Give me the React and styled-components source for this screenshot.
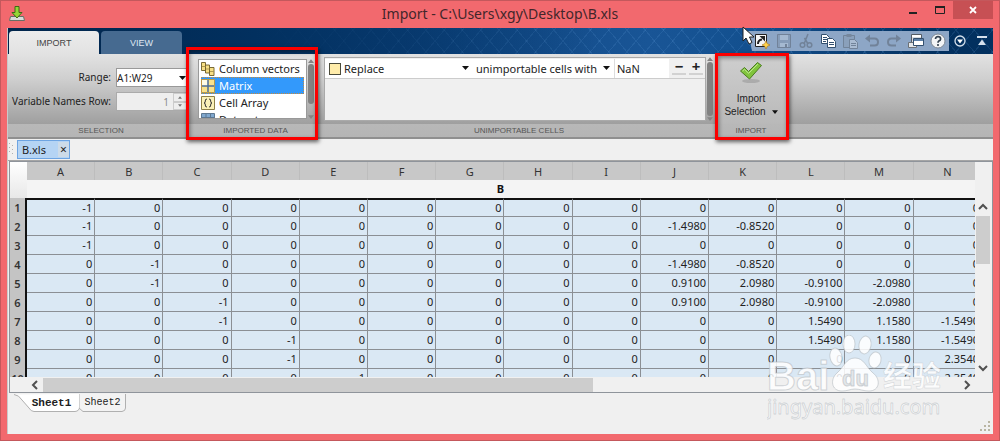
import styled, { createGlobalStyle, css } from "styled-components";

const GlobalStyle = createGlobalStyle`
  * {
    box-sizing: border-box;
  }
  body {
    margin: 0;
    font-family: "Noto Sans", "Open Sans", sans-serif;
    font-size: 11px;
    color: #222;
  }
  button,
  input,
  select {
    margin: 0;
    padding: 0;
    border: none;
    border-radius: 0;
    background: none;
    font: inherit;
    color: inherit;
  }
`;

const Window = styled.div`
  position: relative;
  display: flex;
  flex-direction: column;
  height: 100vh;
  min-height: 320px;
  padding: 0 6px 6px;
  border: 1px solid #c4585c;
  background: #f2696e;
  overflow: hidden;
`;

const TitleBar = styled.header`
  display: grid;
  grid-template-columns: 1fr auto 1fr;
  flex: none;
  height: 27px;
`;

const AppIcon = styled.svg`
  margin: 5px 0 0 2px;
`;

const Title = styled.h1`
  margin: 0;
  font-size: 14px;
  font-weight: 400;
  line-height: 26px;
  color: #43262a;
`;

const WindowButtons = styled.div`
  display: flex;
  justify-content: flex-end;
`;

const WindowButton = styled.button`
  display: flex;
  align-items: center;
  justify-content: center;
  width: ${(props) => (props.$close ? "40px" : "27px")};
  height: 18px;
  background: ${(props) => (props.$close ? "#c75054" : "none")};
`;

const Client = styled.main`
  display: flex;
  flex-direction: column;
  flex: 1;
  min-height: 0;
  border-left: 1px solid #c9c9c9;
  background: #f0f0f0;
`;

const Strip = styled.div`
  display: flex;
  align-items: flex-end;
  flex: none;
  height: 26px;
  background:
    linear-gradient(90deg, #01254b 0, #02305f 25%, transparent 60%),
    repeating-linear-gradient(50deg, transparent 0 13px, rgba(120, 180, 240, 0.12) 13px 14px),
    repeating-linear-gradient(130deg, transparent 0 13px, rgba(120, 180, 240, 0.12) 13px 14px),
    linear-gradient(90deg, #0d437e 40%, #195596 65%, #13508f 75%, #02305f 94%);
`;

const StripTab = styled.button`
  width: ${(props) => (props.$active ? "90px" : "81px")};
  height: 23px;
  margin: 0 1px;
  border-radius: 4px 4px 0 0;
  font-family: "Liberation Sans", Arial, sans-serif;
  font-size: 9px;
  color: ${(props) => (props.$active ? "#444" : "#dfe8f2")};
  background: ${(props) => (props.$active ? "linear-gradient(#ececec, #e2e2e2)" : "#466a90")};
`;

const QuickAccess = styled.div`
  display: flex;
  height: 20px;
  margin: 0 0 3px auto;
  padding-left: 3px;
  background: #8da6c6;
  clip-path: polygon(0 0, 100% 0, 100% 100%, 4px 100%);
`;

const StripActions = styled.div`
  display: flex;
  height: 20px;
  margin-bottom: 3px;
`;

const IconButton = styled.button`
  display: flex;
  align-items: center;
  justify-content: center;
  width: 22px;
  height: 20px;
  opacity: ${(props) => (props.disabled ? 0.3 : 1)};
`;

const Ribbon = styled.div`
  display: flex;
  flex: none;
  height: 85px;
  border-bottom: 2px solid #8f8f8f;
  background: linear-gradient(#e2e2e2 0, #cfcfcf 30%, #9f9f9f 70px, #b8b8b8 70px, #b5b5b5 100%);
`;

const Group = styled.section`
  position: relative;
  display: flex;
  flex-direction: column;
  flex: none;
  width: ${(props) => props.$width};
`;

const GroupBody = styled.div`
  display: flex;
  flex: 1;
  min-height: 0;
  padding: ${(props) => props.$padding || "0"};
`;

const GroupLabel = styled.h2`
  margin: 0;
  padding-left: ${(props) => (props.$indent ? "6px" : "0")};
  font-family: "Liberation Sans", Arial, sans-serif;
  font-size: 8px;
  font-weight: 400;
  line-height: 13px;
  text-align: center;
  color: #555;
`;

const Highlight = styled.div`
  position: absolute;
  inset: ${(props) => props.$inset};
  border: 3px solid #fb0000;
  box-shadow: 1px 2px 4px rgba(0, 0, 0, 0.6), inset 1px 2px 4px rgba(0, 0, 0, 0.4);
  pointer-events: none;
  z-index: 2;
`;

const Fields = styled.div`
  display: grid;
  grid-template-columns: 1fr 72px;
  grid-auto-rows: 19px;
  gap: 5px;
  width: 100%;
  font-size: 10px;
`;

const FieldLabel = styled.label`
  line-height: 19px;
  text-align: right;
  white-space: nowrap;
`;

const SelectBox = styled.span`
  position: relative;
  display: block;
  flex: none;
  width: ${(props) => props.$width || "100%"};
  height: 19px;
  background: #fff;
  ${(props) =>
    props.$framed &&
    css`
      border: 1px solid #999;
    `}

  select {
    appearance: none;
    width: 100%;
    height: 100%;
    padding-left: ${(props) => props.$indent || "0"};
    outline: none;
  }
`;

const SelectArrow = styled.svg`
  position: absolute;
  top: 7px;
  right: ${(props) => props.$right || "3px"};
  pointer-events: none;
`;

const Swatch = styled.span`
  position: absolute;
  top: 4px;
  left: 4px;
  width: 12px;
  height: 12px;
  border: 1px solid #4a4a3a;
  background: #ffecaa;
`;

const Spinner = styled.div`
  display: flex;
  border: 1px solid #aaa;
  background: #eee;

  input {
    flex: 1;
    min-width: 0;
    padding-right: 4px;
    text-align: right;
    color: #8a8a8a;
  }
`;

const SpinnerButtons = styled.div`
  display: flex;
  flex-direction: column;
  width: 14px;

  button {
    display: flex;
    align-items: center;
    justify-content: center;
    flex: 1;
    border: 1px solid #ccc;
  }
`;

const TypeList = styled.div`
  flex: 1;
  min-width: 0;
  padding: 0 2px;
  border: 1px solid #999;
  background: #fff;
  overflow: hidden;
`;

const TypeOption = styled.button`
  display: flex;
  align-items: center;
  gap: 4px;
  width: 100%;
  height: 17px;
  line-height: 17px;
  white-space: nowrap;
  color: ${(props) => (props.$selected ? "#fff" : "#222")};
  background: ${(props) => (props.$selected ? "#3399fb" : "none")};
  outline: ${(props) => (props.$selected ? "1px dotted #c78a3c" : "none")};
  outline-offset: -1px;
`;

const ThinScroll = styled.div`
  display: flex;
  flex-direction: column;
  align-items: center;
  flex: none;
  gap: 1px;
  width: 8px;
`;

const ThinThumb = styled.div`
  flex: ${(props) => (props.$full ? "1" : "0 0 40px")};
  width: 6px;
  margin-bottom: auto;
  border-radius: 3px;
  background: #828282;
`;

const RulePanel = styled.div`
  flex: 1;
  border: 1px solid #aaa;
  background: #f0f0f0;
`;

const RuleRow = styled.div`
  display: flex;
  height: 21px;
  padding: 1px 0;
  border-bottom: 1px solid #ccc;
`;

const RuleValue = styled.input`
  width: 55px;
  height: 19px;
  padding-left: 2px;
  border-left: 1px solid #ddd;
  background: #fff;
`;

const RuleButton = styled.button`
  width: 14px;
  height: 16px;
  margin-left: 3px;
  border-bottom: 2px solid #d2d2d2;
  font-size: 15px;
  font-weight: 700;
  line-height: 13px;
`;

const ImportButton = styled.button`
  display: flex;
  flex-direction: column;
  align-items: center;
  flex: 1;
  padding-top: 7px;
  font-family: "Liberation Sans", Arial, sans-serif;
  font-size: 10px;
  line-height: 13px;
  background: linear-gradient(#cfcfcf, #b9b9b9);
`;

const ImportIcon = styled.svg`
  flex: none;
  margin-bottom: 9px;
`;

const ImportCaption = styled.span`
  display: flex;
  align-items: center;
  gap: 6px;
`;

const FileBar = styled.nav`
  display: flex;
  flex: none;
  height: 22px;
  border-bottom: 1px solid #a5a5a5;
`;

const FileTab = styled.div`
  display: flex;
  align-items: center;
  justify-content: space-between;
  width: 53px;
  height: 19px;
  margin: 1px 0 0 1px;
  padding-left: 4px;
  border: 1px solid #6da4e2;
  background: #b5d4f4;

  button {
    width: 11px;
    height: 15px;
    font-size: 12px;
    line-height: 14px;
    background: #cddbe8;
  }
`;

const Sheet = styled.section`
  display: grid;
  grid-template-columns: 1fr 17px;
  grid-template-rows: 1fr 15px;
  flex: 1;
  min-height: 0;
  margin: 0 0 0 1px;
  border: 1px solid #8f949b;
  background: #f0f0f0;
`;

const Viewport = styled.div`
  overflow: hidden;
  background: #fff;
`;

const Grid = styled.table`
  width: 972px;
  table-layout: fixed;
  border-collapse: separate;
  border-spacing: 0;
  font-size: 11px;
`;

const ColumnHead = styled.th`
  height: 18px;
  padding: 0;
  border-right: 1px solid #bdbdbd;
  font-weight: 400;
  line-height: 17px;
  color: #333;
  background: #c8c8c8;
`;

const Corner = styled.th`
  width: 17px;
  padding: 0;
  background: linear-gradient(#fff, #e8e8e8);
`;

const VariableHead = styled.th`
  height: 18px;
  padding: 0 8px 0 0;
  font-weight: 700;
  line-height: 18px;
  color: #111;
  background: #f4f4f4;
`;

const RowHead = styled.th`
  height: 19px;
  padding: 0;
  border-right: 2px solid #111;
  font-size: 11px;
  font-weight: 600;
  line-height: 17px;
  color: #333;
  background: #c4c4c4;
  overflow: hidden;
`;

const Cell = styled.td`
  height: 19px;
  padding: 0 2px 0 0;
  border-right: 1px solid #8b8f94;
  border-bottom: 1px solid #8b8f94;
  border-top: ${(props) => (props.$first ? "2px solid #111" : "none")};
  line-height: ${(props) => (props.$first ? "16px" : "18px")};
  text-align: right;
  white-space: nowrap;
  background: #dae8f4;
`;

const VerticalScroll = styled.div`
  display: flex;
  flex-direction: column;
  padding-top: 36px;

  svg {
    flex: none;
    margin: 4px 3px;
  }
`;

const VerticalThumb = styled.div`
  height: 48px;
  margin: 0 2px auto 1px;
  background: #cdcdcd;
`;

const HorizontalScroll = styled.div`
  display: flex;
  align-items: center;
  padding-left: 17px;

  svg {
    flex: none;
    margin: 0 3px;
  }
`;

const HorizontalThumb = styled.div`
  width: 58%;
  height: 14px;
  margin: 0 auto 0 0;
  background: #cdcdcd;
`;

const SheetTabs = styled.footer`
  display: flex;
  align-items: flex-start;
  flex: none;
  height: 41px;
  padding: 1px 0 0 6px;
`;

const SheetTab = styled.button`
  position: relative;
  width: ${(props) => (props.$active ? "65px" : "47px")};
  height: 18px;
  padding-left: ${(props) => (props.$active ? "10px" : "0")};
  font-family: "Liberation Mono", "Courier New", monospace;
  font-size: ${(props) => (props.$active ? "11px" : "10px")};
  font-weight: ${(props) => (props.$active ? 700 : 400)};
  line-height: 18px;

  span {
    position: relative;
  }
`;

const TabShape = styled.svg`
  position: absolute;
  inset: 0;
`;

const ResizeGrip = styled.svg`
  margin: 26px 2px 0 auto;
`;

const Pointer = styled.svg`
  position: absolute;
  top: 25px;
  right: 244px;
  pointer-events: none;
`;

const Watermark = styled.svg`
  position: absolute;
  right: 42px;
  bottom: 15px;
  pointer-events: none;
`;

const Arrow = ({ up, color = "#111", size = 8 }) => (
  <svg width={size} height={size / 2 + 1} viewBox="0 0 8 5">
    <path d={up ? "M0 5L4 0L8 5Z" : "M0 0L4 5L8 0Z"} fill={color} />
  </svg>
);

const Chevron = ({ d }) => (
  <svg width="10" height="10" viewBox="0 0 10 10" fill="none" stroke="#505050" strokeWidth="2">
    <path d={d} />
  </svg>
);

const Dropdown = ({ value, label, width, framed, indent, arrowRight, id, children }) => (
  <SelectBox $width={width} $framed={framed} $indent={indent}>
    <select id={id} aria-label={label} defaultValue={value}>
      <option>{value}</option>
    </select>
    {children}
    <SelectArrow $right={arrowRight} width="7" height="4" viewBox="0 0 7 4">
      <path d="M0 0H7L3.5 4Z" fill="#111" />
    </SelectArrow>
  </SelectBox>
);

const Scroller = ({ full }) => (
  <ThinScroll>
    <Arrow up color="#858585" size={6} />
    <ThinThumb $full={full} />
    <Arrow color="#858585" size={6} />
  </ThinScroll>
);

const typeIcons = {
  columns: (
    <g fill="#f7df85" stroke="#6b5b26" strokeWidth=".9">
      <path d="M.5 .5H4.500V8.500H.5Z" />
      <path d="M4.500 3H8.500V11H4.500Z" />
      <path d="M8.500 5.500H13V13.500H8.500Z" />
      <path d="M1 4.500H4.500M5 7H8.500M9 9.500H13" stroke="#a8924a" />
    </g>
  ),
  matrix: (
    <>
      <path d="M.5 .5H13.5V13.5H.5Z" fill="#f9e28c" stroke="#b59a4a" />
      <path d="M1 1H7V7H1Z" fill="#fffbe6" />
      <path d="M7 1V13M1 7H13" stroke="#4c6c96" strokeWidth="1.5" />
    </>
  ),
  cell: (
    <>
      <path d="M.5 .5H13.5V13.5H.5Z" fill="#fbf1b8" stroke="#8f8146" />
      <path
        d="M6 3Q4 3 4.300 5Q4.500 7 3 7Q4.500 7 4.300 9Q4 11 6 11M8 3Q10 3 9.700 5Q9.500 7 11 7Q9.500 7 9.700 9Q10 11 8 11"
        fill="none"
        stroke="#333"
      />
    </>
  ),
  dataset: (
    <>
      <path d="M.5 .5H13.5V13.5H.5Z" fill="#f6eaa8" stroke="#5d7892" />
      <path d="M1 1H13V4H1Z" fill="#80a8cf" />
      <path d="M5 1V14M9.500 1V14M0 4.500H14M0 9H14" stroke="#5d7892" />
    </>
  ),
};

const types = [
  { name: "Column vectors", icon: "columns" },
  { name: "Matrix", icon: "matrix", selected: true },
  { name: "Cell Array", icon: "cell" },
  { name: "Dataset", icon: "dataset" },
];

const quickIcons = [
  {
    name: "New shortcut",
    art: (
      <>
        <path d="M1.500 1.500H12.500V13.500H1.500Z" fill="#f5f5f5" stroke="#222" />
        <path d="M4 11Q4 7 8 6.500" fill="none" stroke="#222" strokeWidth="2" />
        <path d="M5.500 3H11V8.500Z" fill="#222" />
        <path d="M12 8L13.300 10.700L16 12L13.300 13.300L12 16L10.700 13.300L8 12L10.700 10.700Z" fill="#ffd24a" stroke="#ad7616" strokeWidth=".6" />
      </>
    ),
  },
  {
    name: "Save",
    disabled: true,
    art: (
      <>
        <path d="M1.500 1.500H14.500V14.500H1.500Z" fill="#79889b" stroke="#333" />
        <path d="M4 2H12V7H4ZM4 10H12V14H4Z" fill="#dfe5ec" />
        <path d="M9 11H11V14H9Z" fill="#333" />
      </>
    ),
  },
  {
    name: "Cut",
    disabled: true,
    art: (
      <g fill="none" stroke="#333" strokeWidth="1.500">
        <path d="M10 1L6 11M6.500 5L10 11" />
        <circle cx="4.500" cy="12" r="2.300" />
        <circle cx="11.500" cy="12" r="2.300" />
      </g>
    ),
  },
  {
    name: "Copy",
    art: (
      <g fill="#fff" stroke="#34506f">
        <path d="M1.500 1.500H6.500L9.500 4.500V10.500H1.500Z" />
        <path d="M3 4.500H7M3 6.500H7M3 8.500H6" />
        <path d="M7.500 5.500H12.500L15.500 8.500V14.500H7.500Z" />
        <path d="M9 9.500H14M9 11.500H14" />
      </g>
    ),
  },
  {
    name: "Paste",
    disabled: true,
    art: (
      <>
        <path d="M1.500 2.500H12.500V14.500H1.500Z" fill="#8693a3" stroke="#333" />
        <path d="M4.500 1H9.500V4H4.500Z" fill="#444" />
        <path d="M7.500 6.500H12.500L15.500 9.500V15.500H7.500Z" fill="#eee" stroke="#333" />
        <path d="M9 10.500H14M9 12.500H14" stroke="#333" />
      </>
    ),
  },
  {
    name: "Undo",
    disabled: true,
    art: (
      <>
        <path d="M4 5.500H10.500Q14 5.500 14 9Q14 12.500 10.500 12.500H6" fill="none" stroke="#333" strokeWidth="2" />
        <path d="M6 1.500V9.500L1 5.500Z" fill="#333" />
      </>
    ),
  },
  {
    name: "Redo",
    disabled: true,
    art: (
      <>
        <path d="M12 5.500H5.500Q2 5.500 2 9Q2 12.500 5.500 12.500H10" fill="none" stroke="#333" strokeWidth="2" />
        <path d="M10 1.500V9.500L15 5.500Z" fill="#333" />
      </>
    ),
  },
  {
    name: "Switch windows",
    art: (
      <>
        <path d="M3.500 1.500H13.500V9.500H3.500Z" fill="#d7dbe0" stroke="#555d66" />
        <path d="M4 2H13V4H4Z" fill="#fff" />
        <path d="M.5 9.500H8.500V14.500H.5Z" fill="#e5e8eb" stroke="#6b7075" />
        <path d="M5.500 5.500H15.500V12.500H5.500Z" fill="#fff" stroke="#34506f" />
        <path d="M6 6H15V8H6Z" fill="#5c80a8" />
      </>
    ),
  },
  {
    name: "Help",
    art: (
      <>
        <circle cx="8" cy="8" r="7" fill="#f2f4f6" stroke="#7c8794" />
        <path d="M5.500 6Q5.500 3.700 8 3.700Q10.600 3.700 10.600 5.900Q10.600 7.200 8.900 7.900Q8 8.400 8 9.800" fill="none" stroke="#33414f" strokeWidth="1.700" />
        <circle cx="8" cy="12" r="1.100" fill="#33414f" />
      </>
    ),
  },
];

const columns = "ABCDEFGHIJKLMN".split("");

// only the non-zero cells of each row
const rows = [
  { A: "-1" },
  { A: "-1", J: "-1.4980", K: "-0.8520" },
  { A: "-1" },
  { B: "-1", J: "-1.4980", K: "-0.8520" },
  { B: "-1", J: "0.9100", K: "2.0980", L: "-0.9100", M: "-2.0980" },
  { C: "-1", J: "0.9100", K: "2.0980", L: "-0.9100", M: "-2.0980" },
  { C: "-1", L: "1.5490", M: "1.1580", N: "-1.5490" },
  { D: "-1", L: "1.5490", M: "1.1580", N: "-1.5490" },
  { D: "-1", N: "2.3540" },
  { E: "1", N: "2.3540" },
];

const App = () => {
  return (
    <Window>
      <GlobalStyle />
      <TitleBar>
        <AppIcon width="16" height="16" viewBox="0 0 16 16">
          <path d="M1.500 10.500H14.500L15.500 14.500H.5Z" fill="#d9dcd9" stroke="#667066" />
          <path d="M6 .5H10V6.500H13L8 12L3 6.500H6Z" fill="#95d636" stroke="#3c6b15" />
        </AppIcon>
        <Title>Import - C:\Users\xgy\Desktop\B.xls</Title>
        <WindowButtons>
          <WindowButton aria-label="Minimize">
            <svg width="10" height="10" viewBox="0 0 10 10">
              <path d="M1 7H9V9H1Z" fill="#222" />
            </svg>
          </WindowButton>
          <WindowButton aria-label="Maximize">
            <svg width="10" height="8" viewBox="0 0 10 8">
              <path d="M.5 1H9.500V7.500H.5Z" fill="none" stroke="#222" />
              <path d="M0 1H10" stroke="#222" strokeWidth="2" />
            </svg>
          </WindowButton>
          <WindowButton $close aria-label="Close">
            <svg width="8" height="8" viewBox="0 0 8 8">
              <path d="M1 1L7 7M7 1L1 7" stroke="#fff" strokeWidth="1.800" />
            </svg>
          </WindowButton>
        </WindowButtons>
      </TitleBar>

      <Client>
        <Strip>
          <StripTab $active>IMPORT</StripTab>
          <StripTab>VIEW</StripTab>
          <QuickAccess>
            {quickIcons.map((icon) => (
              <IconButton key={icon.name} aria-label={icon.name} disabled={icon.disabled}>
                <svg width="16" height="16" viewBox="0 0 16 16">
                  {icon.art}
                </svg>
              </IconButton>
            ))}
          </QuickAccess>
          <StripActions>
            <IconButton aria-label="Customize">
              <svg width="12" height="12" viewBox="0 0 12 12">
                <circle cx="6" cy="6" r="5" fill="none" stroke="#d5e0ec" strokeWidth="1.300" />
                <path d="M3 4.500H9L6 8.500Z" fill="#fff" />
              </svg>
            </IconButton>
            <IconButton aria-label="Collapse">
              <svg width="10" height="10" viewBox="0 0 10 10">
                <path d="M0 1H10" stroke="#d5e0ec" strokeWidth="2" />
                <path d="M5 3.500L9 9H1Z" fill="#d5e0ec" />
              </svg>
            </IconButton>
          </StripActions>
        </Strip>

        <Ribbon>
          <Group $width="180px">
            <GroupBody $padding="14px 0 0">
              <Fields>
                <FieldLabel htmlFor="range">Range:</FieldLabel>
                <Dropdown id="range" value="A1:W29" framed arrowRight="1px" />
                <FieldLabel htmlFor="names-row">Variable Names Row:</FieldLabel>
                <Spinner>
                  <input id="names-row" defaultValue="1" disabled />
                  <SpinnerButtons>
                    <button aria-label="Increase">
                      <Arrow up color="#777" size={4} />
                    </button>
                    <button aria-label="Decrease">
                      <Arrow color="#777" size={4} />
                    </button>
                  </SpinnerButtons>
                </Spinner>
              </Fields>
            </GroupBody>
            <GroupLabel $indent>SELECTION</GroupLabel>
          </Group>

          <Group $width="129px">
            <GroupBody $padding="5px 2px 5px 10px">
              <TypeList role="listbox" aria-label="Imported data">
                {types.map((type) => (
                  <TypeOption key={type.name} role="option" aria-selected={!!type.selected} $selected={type.selected}>
                    <svg width="14" height="14" viewBox="0 0 14 14">
                      {typeIcons[type.icon]}
                    </svg>
                    {type.name}
                  </TypeOption>
                ))}
              </TypeList>
              <Scroller />
            </GroupBody>
            <GroupLabel $indent>IMPORTED DATA</GroupLabel>
            <Highlight $inset="-7px -1px -3px -2px" />
          </Group>

          <Group $width="398px">
            <GroupBody $padding="3px 1px 3px 7px">
              <RulePanel>
                <RuleRow>
                  <Dropdown label="Rule action" value="Replace" width="149px" indent="19px" arrowRight="5px">
                    <Swatch />
                  </Dropdown>
                  <Dropdown label="Rule target" value="unimportable cells with" width="140px" indent="2px" arrowRight="4px" />
                  <RuleValue aria-label="Replacement" defaultValue="NaN" />
                  <RuleButton aria-label="Remove rule">−</RuleButton>
                  <RuleButton aria-label="Add rule">+</RuleButton>
                </RuleRow>
              </RulePanel>
              <Scroller full />
            </GroupBody>
            <GroupLabel $indent>UNIMPORTABLE CELLS</GroupLabel>
          </Group>

          <Group $width="72px">
            <GroupBody>
              <ImportButton>
                <ImportIcon width="24" height="22" viewBox="0 0 24 22">
                  <ellipse cx="12" cy="20" rx="9" ry="2" fill="#999" opacity=".6" />
                  <path d="M1.500 10L5.500 6.500L9.500 10.500L18.500 1.500L22.500 4.500L10.500 18Z" fill="#80c43c" stroke="#4a7c20" />
                  <path d="M3.500 10L5.500 8.300L9.600 12.300L18.700 3.200" fill="none" stroke="#c2ea95" />
                </ImportIcon>
                <span>Import</span>
                <ImportCaption>
                  Selection <Arrow size={6} />
                </ImportCaption>
              </ImportButton>
            </GroupBody>
            <GroupLabel>IMPORT</GroupLabel>
            <Highlight $inset="-1px -2px -3px 0" />
          </Group>
        </Ribbon>

        <FileBar>
          <svg width="8" height="20" viewBox="0 0 8 20" fill="#b0b0b0">
            <path d="M1 4h1v1H1zM4 6h1v1H4zM1 8h1v1H1zM4 10h1v1H4zM1 12h1v1H1zM4 14h1v1H4z" />
          </svg>
          <FileTab>
            B.xls
            <button aria-label="Close B.xls">×</button>
          </FileTab>
        </FileBar>

        <Sheet>
          <Viewport>
            <Grid>
              <thead>
                <tr>
                  <Corner rowSpan={2} />
                  {columns.map((column) => (
                    <ColumnHead key={column}>{column}</ColumnHead>
                  ))}
                </tr>
                <tr>
                  <VariableHead colSpan={columns.length}>B</VariableHead>
                </tr>
              </thead>
              <tbody>
                {rows.map((row, index) => (
                  <tr key={index}>
                    <RowHead>{index + 1}</RowHead>
                    {columns.map((column) => (
                      <Cell key={column} $first={index === 0}>
                        {row[column] || "0"}
                      </Cell>
                    ))}
                  </tr>
                ))}
              </tbody>
            </Grid>
          </Viewport>
          <VerticalScroll>
            <Chevron d="M1 7L5 3L9 7" />
            <VerticalThumb />
            <Chevron d="M1 3L5 7L9 3" />
          </VerticalScroll>
          <HorizontalScroll>
            <Chevron d="M7 1L3 5L7 9" />
            <HorizontalThumb />
            <Chevron d="M3 1L7 5L3 9" />
          </HorizontalScroll>
        </Sheet>

        <SheetTabs>
          <SheetTab $active>
            <TabShape width="66" height="18" viewBox="0 0 66 18">
              <path d="M0 .5Q5 1 8 6L15 14Q17 17.500 20 17.500H61Q65.500 17 65.500 13V0" fill="#fff" stroke="#b0b0b0" />
            </TabShape>
            <span>Sheet1</span>
          </SheetTab>
          <SheetTab>
            <TabShape width="47" height="18" viewBox="0 0 47 18">
              <path d="M0 0V14L4 17.500H43Q46.500 17 46.500 14V0" fill="#f3f3f3" stroke="#b0b0b0" />
            </TabShape>
            <span>Sheet2</span>
          </SheetTab>
          <ResizeGrip width="12" height="12" viewBox="0 0 12 12" fill="#b9b5a2">
            <path d="M9 1h2v2H9zM5 5h2v2H5zM9 5h2v2H9zM1 9h2v2H1zM5 9h2v2H5zM9 9h2v2H9z" />
          </ResizeGrip>
        </SheetTabs>
      </Client>

      <Pointer width="13" height="19" viewBox="0 0 13 19">
        <path d="M1 1V15L4 12L7 18L10 16.500L7.500 11H12Z" fill="#fff" stroke="#222" />
      </Pointer>

      <Watermark
        width="190"
        height="90"
        viewBox="0 0 190 90"
        fill="#fff"
        fillOpacity=".85"
        stroke="#b4babf"
        strokeOpacity=".6"
        strokeWidth="1"
        strokeLinejoin="round"
      >
        <text x="0" y="55" fontFamily="Liberation Sans" fontSize="40" fontWeight="700">Bai</text>
        <ellipse cx="69" cy="22" rx="6" ry="9" transform="rotate(-12 69 22)" />
        <ellipse cx="82" cy="9" rx="6" ry="9" />
        <ellipse cx="98" cy="10" rx="6" ry="9" transform="rotate(10 98 10)" />
        <ellipse cx="108" cy="25" rx="6" ry="8" transform="rotate(15 108 25)" />
        <path d="M88 23C79 23 77 32 70 38C63 44 64 56 75 56C81 56 83 54 88 54C93 54 96 56 102 56C113 56 114 44 106 38C99 32 97 23 88 23Z" />
        <text x="75" y="51" fontFamily="Liberation Sans" fontSize="22" fontWeight="700" fill="#dfe3e6">du</text>
        <text x="116" y="52" fontFamily="Noto Sans CJK SC, sans-serif" fontSize="29" fontWeight="700" strokeWidth=".5">经验</text>
        <text x="0" y="79" fontFamily="Noto Sans, sans-serif" fontSize="20" strokeWidth=".8">jingyan.baidu.com</text>
      </Watermark>
    </Window>
  );
};

export default App;
